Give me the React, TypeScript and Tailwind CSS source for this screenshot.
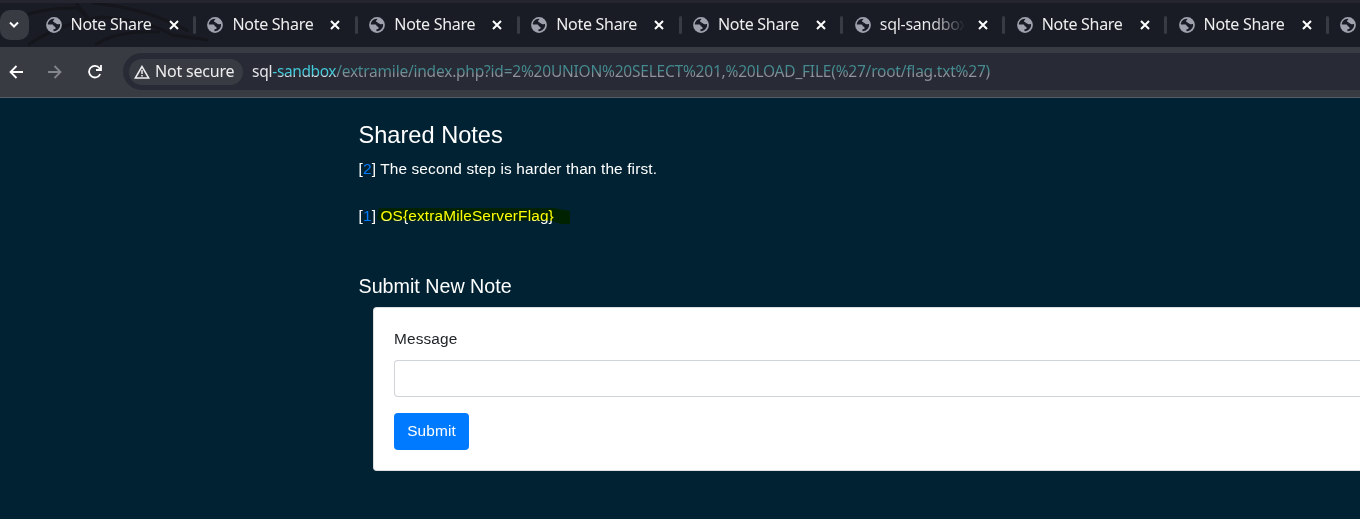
import React from "react";

const tabs = ["Note Share", "Note Share", "Note Share", "Note Share", "Note Share", "sql-sandbox", "Note Share", "Note Share", ""];

function Globe() {
  return (
    <svg viewBox="0 0 16 16" className="h-4 w-4 shrink-0">
      <circle cx="8" cy="8" r="7.9" fill="#9fa2ad" />
      <path d="M8.4 1.8C8.8 2.6 7 3 7 4.2c0 1 1.7.4 1.8 1.5C8.9 7 6.3 6.6 5.9 7.6H1.8C1.7 4.4 4.6 1.5 8.4 1.8zM9.6 5.9c.6 1.1 2.5 1.5 4.4 1.2.7 3.5-2.3 7.2-6.4 7.1-.3-1.2-.2-1.8.3-2.1 1.6.2 1.8-.5 1.6-1.4-.2-.8-.7-1.2-1.7-1.4-.1-1-1-1.7-1.9-1.8z" fill="#1a1c25" />
    </svg>
  );
}

function Tab({ label }: { label: string }) {
  const clipped = label === "sql-sandbox";
  return (
    <div className="flex h-[38px] w-[161.85px] shrink-0 items-center">
      <Globe />
      <span className={`ml-[9px] w-[85px] overflow-hidden whitespace-nowrap pb-[2px] text-[16px] leading-6 tracking-[-0.28px] ${clipped ? "bg-gradient-to-r from-[#eeeeef] from-60% to-transparent bg-clip-text text-transparent" : "text-[#eeeeef]"}`}>{label}</span>
      <svg viewBox="0 0 10 10" className="ml-[13px] h-[10px] w-[10px] shrink-0" stroke="#fff" strokeWidth="2"><path d="M1 1l8 8M9 1L1 9" /></svg>
      <span className="ml-[14.5px] h-[18px] w-[3px] rounded-full bg-[#393b44]" />
    </div>
  );
}

export default function App() {
  return (
    <div className="flex h-[519px] w-[1360px] flex-col overflow-hidden bg-[#002233] font-['Liberation_Sans',sans-serif]">
      <header className="shrink-0 font-['Noto_Sans',sans-serif]">
        <div className="h-[3px] bg-[#24252f]" />
        <div className="relative flex h-11 items-center overflow-hidden bg-[#1a1c25]">
          <svg viewBox="0 0 220 44" className="absolute left-0 top-0 h-11 w-[220px]" fill="none" stroke="#15161c" strokeWidth="3">
            <path d="M10 18Q40 4 78 5l14 15M28 42Q60 20 102 14q45 3 70 18l36 5M76 0l12 15M92 0q55 5 96 28M95 42q22-15 65-13" />
          </svg>
          <button className="relative flex h-[30px] w-[29px] shrink-0 items-center justify-center rounded-[10px] bg-[#393b43] pr-px">
            <svg viewBox="0 0 10 8" className="h-2 w-[10px]" fill="none" stroke="#fff" strokeWidth="2"><path d="M1 1.5l4 4 4-4" /></svg>
          </button>
          <div className="relative ml-[16.6px] flex">{tabs.map((label, i) => <Tab key={i} label={label} />)}</div>
        </div>
        <div className="flex h-[51px] items-start border-b border-[#575d66] bg-[#393b43] pt-[6px]">
          <div className="flex h-[37px] w-[123px] items-center pl-[9px]">
            <svg viewBox="0 0 14 14" className="h-[14px] w-[14px]" fill="none" stroke="#fff" strokeWidth="1.8"><path d="M14 7H2M7.5 1L1.5 7l6 6" /></svg>
            <svg viewBox="0 0 14 14" className="ml-[25px] h-[14px] w-[14px]" fill="none" stroke="#85868c" strokeWidth="1.8"><path d="M0 7h12M6.5 1l6 6-6 6" /></svg>
            <svg viewBox="0 0 14 14" className="ml-[26px] h-[14px] w-[14px]" fill="none" stroke="#fff" strokeWidth="1.8"><path d="M12.2 9A5.8 5.8 0 1 1 11.5 3.2L13 5M13 0v5H8" /></svg>
          </div>
          <div className="flex h-[37px] flex-1 items-center rounded-l-full bg-[#282a35] pl-[6px]">
            <div className="flex h-[26px] w-[114px] items-center rounded-full bg-[#393b43] pl-[5px]">
              <svg viewBox="0 0 16 14" className="h-[14px] w-4" fill="none" stroke="#eee" strokeWidth="1.5"><path d="M8 1.5L1.3 13h13.4zM8 5v4M8 10v1.5" /></svg>
              <span className="ml-[5px] whitespace-nowrap pb-px text-[16px] tracking-[-0.2px] text-[#eeeeef]">Not secure</span>
            </div>
            <span className="ml-[9px] whitespace-nowrap pb-px text-[15.5px] leading-6 tracking-[-0.22px]">
              <span className="text-[#e4e4e7]">sql</span>
              <span className="bg-gradient-to-b from-[#42ccdc] from-65% to-[#d8dfe3] to-75% bg-clip-text tracking-[-0.4px] text-transparent">-sandbox</span>
              <span className="bg-gradient-to-b from-[#438b90] from-50% to-[#90939c] to-65% bg-clip-text text-transparent">/extramile/index.php?id=2%20UNION%20SELECT%201,%20LOAD_FILE(%27/root/flag.txt%27)</span>
            </span>
          </div>
        </div>
      </header>
      <main className="flex flex-col pl-[358.5px] pt-[23px] text-[15.4px] leading-6 tracking-[0.14px] text-white">
        <h1 className="text-[23.6px] leading-[29px] tracking-normal">Shared Notes</h1>
        <p className="mt-[7px]">[<a className="text-[#007bff]">2</a>] The second step is harder than the first.</p>
        <p className="relative mt-[23px] w-max">
          [<a className="text-[#007bff]">1</a>] OS&#123;extraMileServerFlag&#125;
          <svg viewBox="0 0 195 18" className="absolute left-[17px] top-[3px] h-[18px] w-[195px] mix-blend-multiply" fill="#ff0"><path d="M3 1H178L194 4V17H185L174 13.5H3L1 11z" /></svg>
        </p>
        <h2 className="mt-[46px] text-[19.7px] leading-6 tracking-normal">Submit New Note</h2>
        <section className="ml-[14.5px] mt-[9px] h-[164px] rounded-l border border-r-0 border-[#dfdfdf] bg-white pl-5 pt-[19px] text-[#212529]">
          <label className="block">Message</label>
          <div className="mt-[9px] h-[37px] rounded-l border border-r-0 border-[#ced4da]" />
          <button className="mt-4 h-[37px] w-[75px] rounded bg-[#007bff] pb-px text-white">Submit</button>
        </section>
      </main>
    </div>
  );
}
